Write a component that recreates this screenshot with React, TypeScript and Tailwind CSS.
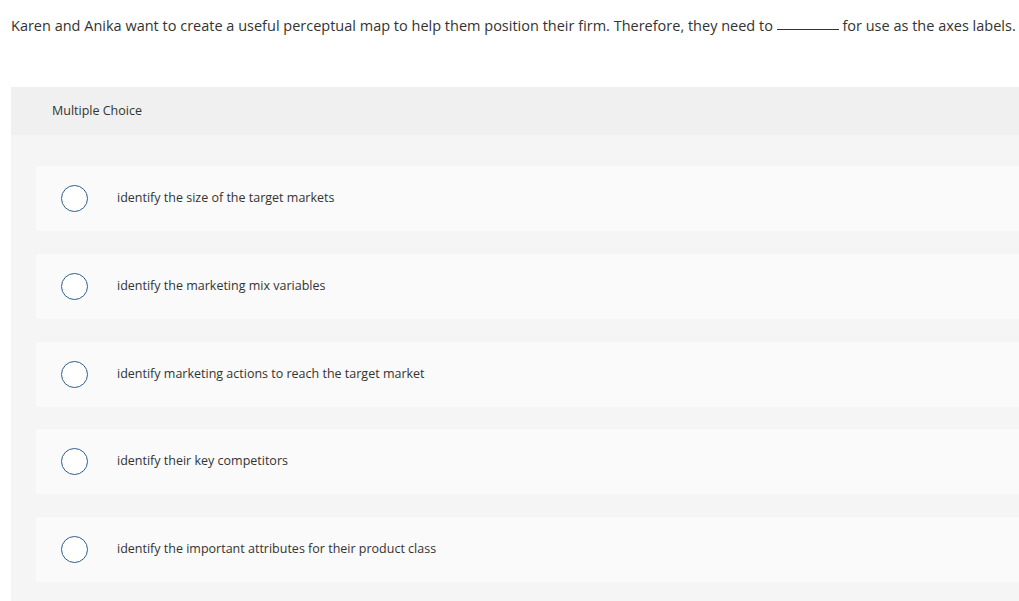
import React from "react";

const options = [
  "identify the size of the target markets",
  "identify the marketing mix variables",
  "identify marketing actions to reach the target market",
  "identify their key competitors",
  "identify the important attributes for their product class",
];

export default function App() {
  return (
    <div
      className="min-h-[601px] bg-white text-[#333333] overflow-hidden"
      style={{ fontFamily: "'Open Sans', Lato, sans-serif" }}
    >
      <p className="pl-[11px] pt-[15px] text-[14.5px] leading-[22px] whitespace-nowrap">
        Karen and Anika want to create a useful perceptual map to help them position their firm. Therefore, they need to{" "}
        <span className="inline-block w-[62px] border-b border-[#333333] translate-y-[-1px]" />{" "}
        for use as the axes labels.
      </p>
      <div className="ml-[11px] mt-[50px] bg-[#f5f5f5] pb-[20px]">
        <div className="h-[48px] bg-[#f0f0f0] flex items-center pl-[41px] text-[12.5px]">
          Multiple Choice
        </div>
        <div className="pt-[31px] pl-[25px] flex flex-col gap-[22.75px]">
          {options.map((o) => (
            <div
              key={o}
              className="h-[65px] bg-[#fafafa] rounded-l-[3px] flex items-center"
            >
              <span className="ml-[25px] w-[27px] h-[27px] rounded-full border-[1.5px] border-[#2c5f8e] bg-white shrink-0" />
              <span className="ml-[29px] text-[12.5px]">{o}</span>
            </div>
          ))}
        </div>
      </div>
    </div>
  );
}
